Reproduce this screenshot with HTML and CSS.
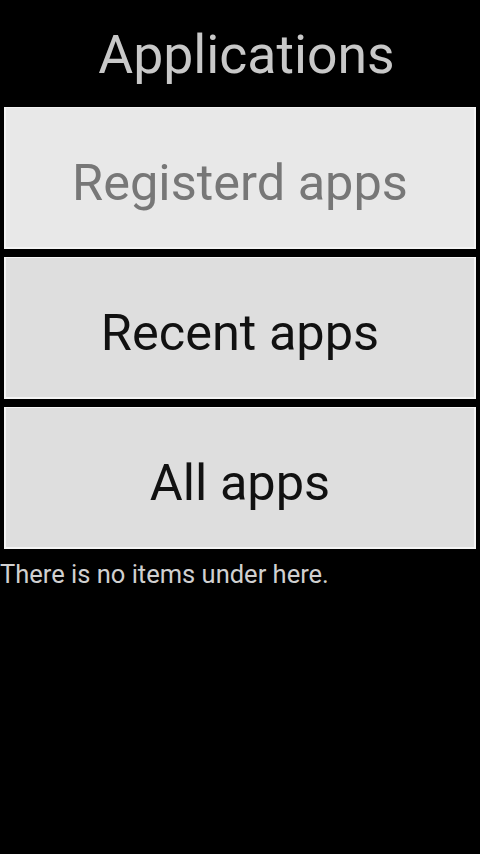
FILE: index.html
```html
<!DOCTYPE html>
<html>
<head>
<meta charset="utf-8">
<link rel="stylesheet" href="styles.css">
</head>
<body>
<div class="screen">
  <h1 class="title">Applications</h1>
  <div class="buttons">
    <div class="btn btn-disabled">Registerd apps</div>
    <div class="btn">Recent apps</div>
    <div class="btn">All apps</div>
  </div>
  <p class="empty">There is no items under here.</p>
</div>
</body>
</html>
```
FILE: styles.css
```css
html, body {
  margin: 0;
  padding: 0;
  background: #000;
}
.screen {
  width: 480px;
  height: 854px;
  background: #000;
  font-family: Roboto, "Noto Sans", sans-serif;
  display: flex;
  flex-direction: column;
}
.title {
  margin: 0;
  height: 107px;
  box-sizing: border-box;
  padding-top: 23px;
  padding-left: 13px;
  text-align: center;
  font-size: 53.5px;
  font-weight: 400;
  line-height: 64px;
  color: #c8c8c8;
}
.buttons {
  display: flex;
  flex-direction: column;
  gap: 8px;
  padding: 0 4px;
}
.btn {
  height: 142px;
  box-sizing: border-box;
  border: 2px solid #f4f4f4;
  border-top-width: 1px;
  padding-top: 10px;
  background: #dedede;
  display: flex;
  align-items: center;
  justify-content: center;
  font-size: 50.5px;
  color: #111;
}
.btn-disabled {
  background: #e8e8e8;
  color: #777;
}
.empty {
  margin: 9px 0 0 0;
  font-size: 25.5px;
  line-height: 32px;
  color: #d0d0d0;
}
```
